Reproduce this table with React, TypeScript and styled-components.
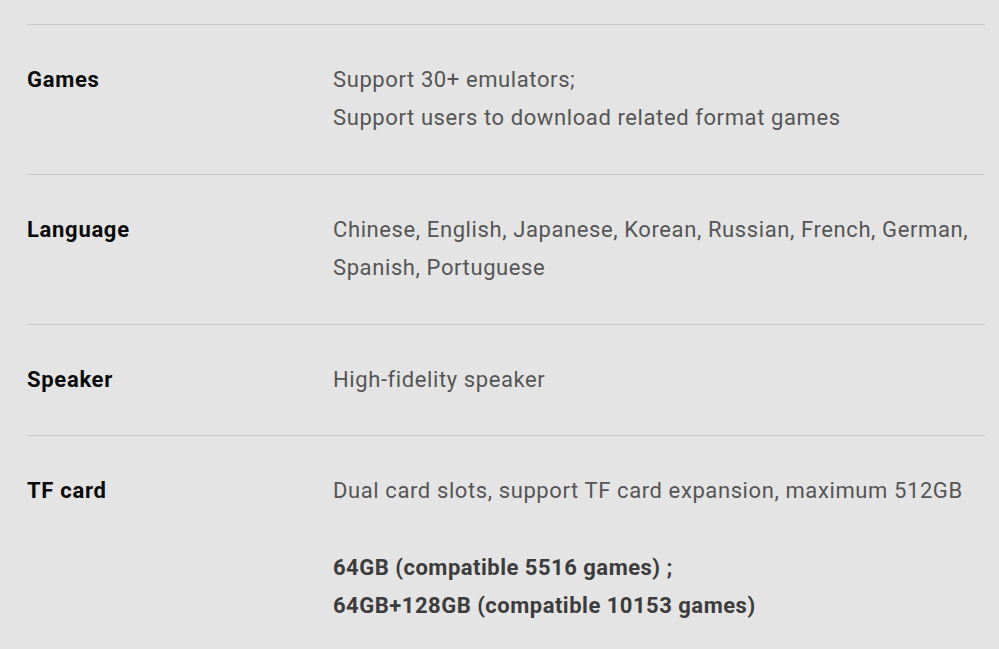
import React from 'react';
import styled, { createGlobalStyle } from 'styled-components';

const GlobalStyle = createGlobalStyle`
  html, body {
    margin: 0;
    padding: 0;
    background-color: #e4e4e4;
  }
  body {
    font-family: Roboto, 'Noto Sans', Arial, sans-serif;
  }
`;

const SpecList = styled.div`
  padding: 24px 14px 0 27px;
`;

const SpecRow = styled.div`
  display: grid;
  grid-template-columns: 306px 1fr;
  border-top: 1px solid #c8c8c8;
  padding: 36px 0;
  font-size: 22px;
  line-height: 38.4px;
`;

const SpecLabel = styled.div`
  font-weight: 700;
  letter-spacing: 0.7px;
  color: #0a0a0a;
`;

const SpecValue = styled.div`
  color: #555;
  letter-spacing: 0.6px;
`;

const Highlight = styled.div`
  margin-top: 38.4px;
  font-weight: 700;
  letter-spacing: 0.5px;
  color: #3c3c3c;
`;

type Spec = {
  label: string;
  lines: string[];
  highlight?: string[];
};

const specs: Spec[] = [
  {
    label: 'Games',
    lines: ['Support 30+ emulators;', 'Support users to download related format games']
  },
  {
    label: 'Language',
    lines: ['Chinese, English, Japanese, Korean, Russian, French, German, Spanish, Portuguese']
  },
  {
    label: 'Speaker',
    lines: ['High-fidelity speaker']
  },
  {
    label: 'TF card',
    lines: ['Dual card slots, support TF card expansion, maximum 512GB'],
    highlight: ['64GB (compatible 5516 games) ;', '64GB+128GB (compatible 10153 games)']
  }
];

const App = () => (
  <>
    <GlobalStyle />
    <SpecList>
      {specs.map(spec => (
        <SpecRow key={spec.label}>
          <SpecLabel>{spec.label}</SpecLabel>
          <SpecValue>
            {spec.lines.map(line => (
              <div key={line}>{line}</div>
            ))}
            {spec.highlight && (
              <Highlight>
                {spec.highlight.map(line => (
                  <div key={line}>{line}</div>
                ))}
              </Highlight>
            )}
          </SpecValue>
        </SpecRow>
      ))}
    </SpecList>
  </>
);

export default App;
